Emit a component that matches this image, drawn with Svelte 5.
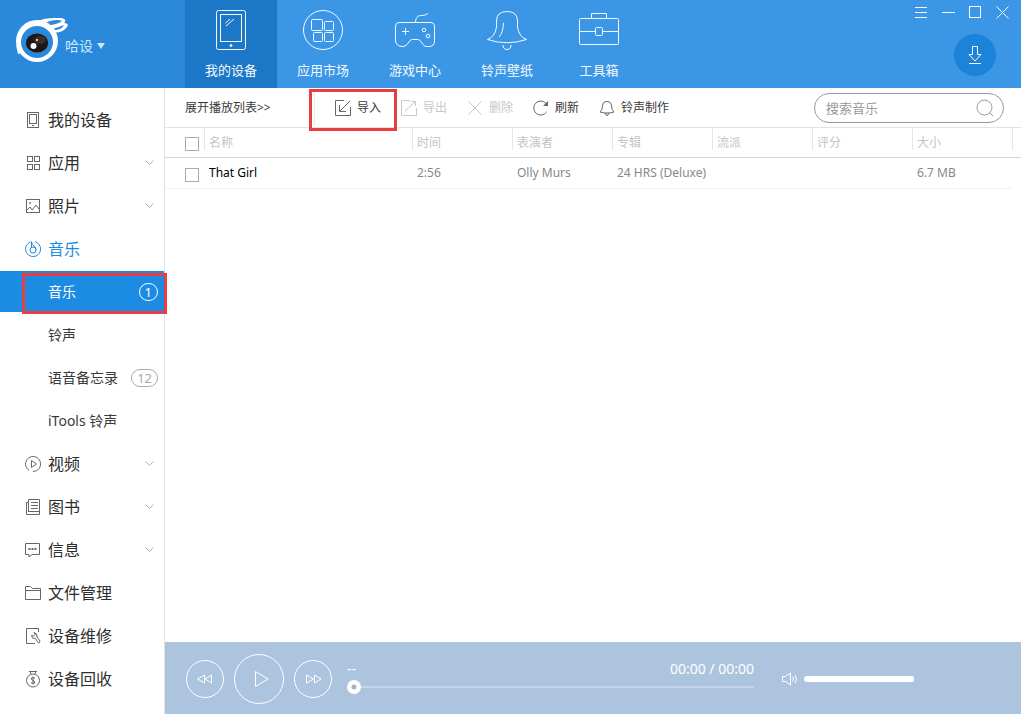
<script>
  const tabs = [
    { id: 'device', label: '我的设备', active: true },
    { id: 'apps', label: '应用市场' },
    { id: 'games', label: '游戏中心' },
    { id: 'bell', label: '铃声壁纸' },
    { id: 'tools', label: '工具箱' }
  ];

  const menu = [
    { icon: 'device', label: '我的设备' },
    { icon: 'apps', label: '应用', expandable: true },
    { icon: 'photo', label: '照片', expandable: true },
    {
      icon: 'music',
      label: '音乐',
      open: true,
      children: [
        { label: '音乐', count: 1, selected: true },
        { label: '铃声' },
        { label: '语音备忘录', count: 12 },
        { label: 'iTools 铃声' }
      ]
    },
    { icon: 'video', label: '视频', expandable: true },
    { icon: 'book', label: '图书', expandable: true },
    { icon: 'message', label: '信息', expandable: true },
    { icon: 'folder', label: '文件管理' },
    { icon: 'repair', label: '设备维修' },
    { icon: 'recycle', label: '设备回收' }
  ];

  const actions = [
    { icon: 'import', label: '导入', marked: true },
    { icon: 'export', label: '导出', disabled: true },
    { icon: 'delete', label: '删除', disabled: true },
    { icon: 'refresh', label: '刷新' },
    { icon: 'ring', label: '铃声制作' }
  ];

  const columns = ['时间', '表演者', '专辑', '流派', '评分', '大小'];
  const songs = [
    { name: 'That Girl', cells: ['2:56', 'Olly Murs', '24 HRS (Deluxe)', '', '', '6.7 MB'] }
  ];

  let query = $state('');
  let position = $state(0);
  let volume = $state(100);
</script>

<div class="app">
  <header>
    <div class="brand">
      <svg class="logo" viewBox="0 0 54 48" width="54" height="48" aria-hidden="true">
        <path d="M4 17C12 7 28 1 43 2C50 2 52 4 49 7C54 7 54 10 49 14C46 16 43 17 39 16L36 20Z" fill="#fff" />
        <path d="M28 8C35 4 43 3 47 5C45 7 38 9 31 10ZM38 13L49 9C48 12 43 14 40 14Z" fill="#2b89dc" />
        <circle cx="22" cy="25" r="21" fill="#fff" />
        <path d="M1 29L3 38L8 37Z" fill="#fff" />
        <circle cx="22" cy="26" r="16" fill="#2b89dc" />
        <ellipse cx="22" cy="27" rx="11" ry="9.500" fill="#1d1716" />
        <ellipse cx="25" cy="24" rx="6" ry="4" fill="#39302d" />
        <circle cx="22" cy="24" r="1" fill="#fff" />
        <circle cx="18.500" cy="30" r="3" fill="#fff" />
      </svg>
      <button class="user" type="button">哈设
        <svg viewBox="0 0 8 6" width="8" height="6" aria-hidden="true"><path d="M0 0H8L4 6Z" fill="currentColor" /></svg>
      </button>
    </div>

    <nav class="tabs">
      {#each tabs as tab}
        <button type="button" class:active={tab.active}>
          <svg viewBox="0 0 42 42" width="42" height="42" class="line" aria-hidden="true">
            {#if tab.id === 'device'}
              <rect x="6.500" y="1.500" width="29" height="39" rx="2" />
              <rect x="10.500" y="5.500" width="21" height="27" />
              <path d="M15.500 14L20 10M16 17L24 10" />
              <circle cx="21" cy="36.500" r="1" fill="currentColor" />
            {:else if tab.id === 'apps'}
              <circle cx="21" cy="21" r="19.500" />
              <rect x="9.500" y="10.500" width="11" height="11" rx="1" />
              <rect x="22.500" y="12.500" width="9" height="9" rx="1" />
              <rect x="11.500" y="23.500" width="9" height="9" rx="1" />
              <rect x="22.500" y="23.500" width="9" height="9" rx="1" />
            {:else if tab.id === 'games'}
              <path d="M5 13.500H37Q40.500 13.500 40.500 17V32Q40.500 37.500 35 37.500H32Q30 37.500 28 34L26 31.500Q25 30.500 23.500 30.500H18.500Q17 30.500 16 31.500L13 35.500Q11 37.500 9 37.500Q1.500 37.500 1.500 31V17Q1.500 13.500 5 13.500Z" />
              <path d="M21.500 13C22 7 25 6.500 28 6.500Q32 6 34 4.500M8 22.500H15M11.500 19V26" />
              <circle cx="30" cy="21" r="1.800" /><circle cx="34" cy="27" r="1.800" />
            {:else if tab.id === 'bell'}
              <path d="M1.500 30.500Q9 28 10.500 18V12Q10.500 2.500 21 2.500Q31.500 2.500 31.500 12V18Q33 28 40.500 30.500Q21 37 1.500 30.500Z" />
              <path d="M17 36Q17 40.500 21 40.500Q25 40.500 25 36M17.500 14Q17 24 13 28" />
            {:else}
              <rect x="1.500" y="9.500" width="39" height="26" rx="1" />
              <path d="M13.500 9V4.500H28.500V9M2 22.500H17M25 22.500H40" />
              <rect x="17.500" y="18.500" width="7" height="8" rx="1" />
            {/if}
          </svg>
          <span>{tab.label}</span>
        </button>
      {/each}
    </nav>

    <div class="corner">
      <div class="window">
        <button type="button" aria-label="菜单"><svg viewBox="0 0 13 13" width="13" height="13" class="line"><path d="M0 1.500H12M0 6.500H12M0 11.500H12" /></svg></button>
        <button type="button" aria-label="最小化"><svg viewBox="0 0 13 13" width="13" height="13" class="line"><path d="M0 6.500H13" /></svg></button>
        <button type="button" aria-label="最大化"><svg viewBox="0 0 13 13" width="13" height="13" class="line"><rect x=".5" y=".5" width="11" height="11" /></svg></button>
        <button type="button" aria-label="关闭"><svg viewBox="0 0 13 13" width="13" height="13" class="line"><path d="M.5 .5L12.500 12.500M12.500 .5L.5 12.500" /></svg></button>
      </div>
      <button class="download" type="button" aria-label="下载">
        <svg viewBox="0 0 16 20" width="16" height="20" class="line"><path d="M5.500 1.500H10.500V9.500H14L8 16L2 9.500H5.500ZM2 18.500H14" /></svg>
      </button>
    </div>
  </header>

  <div class="body">
    <aside>
      {#each menu as item}
        <button type="button" class="item" class:open={item.open}>
          <svg viewBox="0 0 18 18" width="18" height="18" class="line" aria-hidden="true">
            {#if item.icon === 'device'}
              <rect x="3.500" y="1.500" width="11" height="15" /><rect x="5.500" y="3.500" width="7" height="9" /><path d="M8 14.500H10" />
            {:else if item.icon === 'apps'}
              <rect x="3.500" y="2.500" width="5" height="5" /><rect x="10.500" y="2.500" width="5" height="5" /><rect x="3.500" y="10.500" width="5" height="5" /><rect x="10.500" y="10.500" width="5" height="5" />
            {:else if item.icon === 'photo'}
              <rect x="2.500" y="2.500" width="13" height="13" /><path d="M3 13L6 10L8 13L12 8L15 12" /><circle cx="6" cy="6" r=".6" />
            {:else if item.icon === 'music'}
              <path d="M6.500 2A7.500 7.500 0 1 0 11 1.800M7.500 1.500V7.500M7.500 2Q8 4.500 10 6Q12 7.500 12 10" /><circle cx="9" cy="10" r="3" />
            {:else if item.icon === 'video'}
              <path d="M5 15.300A7.500 7.500 0 1 1 9 16.500M7.500 5.500L12.500 9L7.500 12.500Z" />
            {:else if item.icon === 'book'}
              <path d="M4.500 14V1.500H15.500V16.500H2.500V4.500H4.500M7 4.500H14M7 7.500H14M7 10.500H14M4.500 13.500H15" />
            {:else if item.icon === 'message'}
              <path d="M1.500 2.500H15.500V13.500H8L5 16V13.500H1.500Z" /><path d="M4.500 8H6.500M7.500 8H9.500M10.500 8H12.500" stroke-width="2" />
            {:else if item.icon === 'folder'}
              <path d="M1.500 15.500V2.500H6.500L8.500 4.500H16.500V15.500ZM2 6.500H16" />
            {:else if item.icon === 'repair'}
              <path d="M14.500 5V1.500H2.500V16.500H11" />
              <path d="M11.500 11.500L14 15.500Q16 16.500 16 14L13 10Q13.500 6 10 5.500L11 7.500L9.500 9L7.500 8.500Q7.500 12 11.500 11.500Z" />
            {:else}
              <circle cx="9" cy="10.500" r="6.500" /><path d="M5 1.500H13M6 2L7.500 4.500M12 2L10.500 4.500M11 8.500Q9 7 7.500 8Q6.500 9.500 9 10.500Q11.500 11.500 10.500 13Q9 14 7 12.500M9 6.500V14.500" />
            {/if}
          </svg>
          <span>{item.label}</span>
          {#if item.expandable}
            <svg class="chevron" viewBox="0 0 9 5" width="9" height="5" aria-hidden="true"><path d="M.5 .5L4.500 4.500L8.500 .5" /></svg>
          {/if}
        </button>
        {#each item.children ?? [] as child}
          <button type="button" class="sub" class:selected={child.selected}>
            <span>{child.label}</span>
            {#if child.count}<span class="count">{child.count}</span>{/if}
            {#if child.selected}<i class="mark"></i>{/if}
          </button>
        {/each}
      {/each}
    </aside>

    <main>
      <div class="toolbar">
        <button type="button" class="expand">展开播放列表&gt;&gt;</button>
        <div class="actions">
          {#each actions as action}
            <button type="button" disabled={action.disabled}>
              <svg viewBox="0 0 16 16" width="16" height="16" class="line" aria-hidden="true">
                {#if action.icon === 'import'}
                  <path d="M9 .5H.5V15.500H15.500V7M15 1L5 11M4.500 5V11.500H11" />
                {:else if action.icon === 'export'}
                  <path d="M9 .5H.5V15.500H15.500V8M4 11L14.500 1.500M10 1.500H14.500V6" />
                {:else if action.icon === 'delete'}
                  <path d="M1.500 1.500L14.500 14.500M14.500 1.500L1.500 14.500" />
                {:else if action.icon === 'refresh'}
                  <path d="M13.500 12A7 7 0 1 1 13 3.500" /><path d="M15 1V6H10Z" fill="currentColor" stroke="none" />
                {:else}
                  <path d="M1 12Q3.500 10 3.500 6Q3.500 1.500 8 1.500Q12.500 1.500 12.500 6Q12.500 10 15 12Q12 13 8 13Q4 13 1 12ZM6.500 13Q6.500 15.500 8 15.500Q9.500 15.500 9.500 13" />
                {/if}
              </svg>
              <span>{action.label}</span>
              {#if action.marked}<i class="mark"></i>{/if}
            </button>
          {/each}
        </div>
        <label class="search">
          <input type="text" placeholder="搜索音乐" aria-label="搜索音乐" bind:value={query} />
          <svg viewBox="0 0 18 18" width="18" height="18" class="line" aria-hidden="true"><circle cx="8.500" cy="8.500" r="7.500" /><path d="M14 14L17 17" /></svg>
        </label>
      </div>

      <div class="list">
        <table>
          <colgroup>
            <col class="c-check" /><col />
            {#each columns as _}<col class="c-data" />{/each}
            <col class="c-end" />
          </colgroup>
          <thead>
            <tr>
              <th class="check"><input type="checkbox" aria-label="全选" /></th>
              <th>名称</th>
              {#each columns as column}<th>{column}</th>{/each}
              <td></td>
            </tr>
          </thead>
          <tbody>
            {#each songs as song}
              <tr>
                <td class="check"><input type="checkbox" aria-label={song.name} /></td>
                <td class="name">{song.name}</td>
                {#each song.cells as cell}<td>{cell}</td>{/each}
                <td class="end"></td>
              </tr>
            {/each}
          </tbody>
        </table>
      </div>

      <footer>
        <button type="button" class="round" aria-label="上一首"><svg viewBox="0 0 18 12" width="18" height="12" class="line"><path d="M8.500 2V10L1.500 6ZM15.500 2V10L9 6Z" /></svg></button>
        <button type="button" class="round play" aria-label="播放"><svg viewBox="0 0 18 18" width="18" height="18" class="line"><path d="M5.500 1.500V16.500L18 9Z" /></svg></button>
        <button type="button" class="round" aria-label="下一首"><svg viewBox="0 0 18 12" width="18" height="12" class="line"><path d="M2.500 2V10L9.500 6ZM10.500 2V10L17 6Z" /></svg></button>
        <div class="progress">
          <div class="info"><span>--</span><span class="time">00:00 / 00:00</span></div>
          <input type="range" min="0" max="100" aria-label="播放进度" bind:value={position} />
        </div>
        <div class="volume">
          <svg viewBox="0 0 16 14" width="16" height="14" class="line" aria-hidden="true"><path d="M.5 4.500H3.500L8.500 1V13L3.500 9.500H.5ZM10.500 4.500Q12.500 7 10.500 9.500M13 3Q16 7 13 11" /></svg>
          <input type="range" min="0" max="100" aria-label="音量" bind:value={volume} />
        </div>
      </footer>
    </main>
  </div>
</div>

<style>
  :global(body) { margin: 0; }
  .app {
    display: flex;
    flex-direction: column;
    min-height: 100vh;
    background: #fff;
    color: #3a3a3a;
    font: 12px/18px "Noto Sans", "Noto Sans CJK SC", sans-serif;
  }
  button, input { font: inherit; color: inherit; }
  button { border: 0; padding: 0; background: none; }
  svg { display: block; flex: none; }
  .line { fill: none; stroke: currentColor; stroke-width: 1; }

  header { display: flex; height: 88px; background: #3b97e6; color: #f2faff; }
  .brand { display: flex; width: 185px; box-sizing: border-box; padding: 16px 0 0 15px; background: #2b89dc; }
  .logo { margin-right: -4px; }
  .user { display: flex; align-items: center; gap: 4px; height: 20px; margin-top: 20px; font-size: 14px; line-height: 20px; color: #c9e9ff; }
  .tabs { display: flex; flex: 1; font-size: 13px; }
  .tabs button { display: flex; flex-direction: column; align-items: center; width: 92px; padding-top: 9px; gap: 10px; }
  .tabs .active { background: #1c77c7; }
  .corner { display: flex; flex-direction: column; align-items: flex-end; gap: 15px; padding: 6px 12px 0 0; }
  .window { display: flex; gap: 14px; }
  .download { display: grid; place-items: center; width: 42px; height: 42px; margin-right: 13px; border-radius: 50%; background: #1c83d8; }

  .body { display: flex; flex: 1; }
  aside { display: flex; flex-direction: column; width: 164px; padding-top: 10px; border-right: 1px solid #e2e2e2; }
  .item { display: flex; align-items: center; gap: 6px; height: 43px; padding: 0 10px 0 24px; font-size: 16px; color: #2e2e2e; }
  .item .line { color: #666; }
  .item.open, .item.open .line { color: #1c8be0; }
  .chevron { margin-left: auto; fill: none; stroke: #b0b0b0; }
  .sub { position: relative; display: flex; align-items: center; justify-content: space-between; height: 41px; margin: 1px 0; padding: 0 6px 0 48px; font-size: 14px; }
  .sub.selected { background: #1c8ce3; color: #fff; }
  .count { box-sizing: border-box; min-width: 19px; height: 18px; padding: 0 5px; border: 1px solid #aaa; border-radius: 9px; font-size: 13px; line-height: 16px; color: #aaa; text-align: center; }
  .selected .count { border-color: #fff; color: #fff; }
  .mark { position: absolute; border: 3px solid #e83e42; pointer-events: none; }
  .sub .mark { inset: 2px -3px -2px 22px; }

  main { display: flex; flex: 1; flex-direction: column; min-width: 0; }
  .toolbar { display: flex; align-items: center; height: 39px; padding: 0 17px 0 20px; border-bottom: 1px solid #e3e3e3; }
  .expand { width: 129px; text-align: left; white-space: nowrap; }
  .actions { display: flex; flex: 1; align-items: center; gap: 20px; height: 36px; padding-left: 20px; border-left: 1px solid #e8e8e8; }
  .actions button { position: relative; display: flex; align-items: center; gap: 6px; white-space: nowrap; }
  .actions .line { color: #666; }
  .actions button:disabled, .actions button:disabled .line { color: #c8c8c8; }
  .actions .mark { inset: -10px -16px -14px -26px; }
  .search { display: flex; align-items: center; box-sizing: border-box; width: 190px; height: 30px; padding: 0 9px 0 11px; border: 1px solid #999; border-radius: 15px; color: #999; font-size: 13px; }
  .search input { flex: 1; min-width: 0; padding: 0; border: 0; outline: 0; background: none; }
  .search input::placeholder { color: #999; opacity: 1; }

  .list { flex: 1; }
  table { width: 100%; table-layout: fixed; border-collapse: separate; border-spacing: 0; }
  .c-check { width: 39px; }
  .c-data { width: 100px; }
  .c-end { width: 9px; }
  th, td { height: 29px; padding: 0 0 0 5px; border-bottom: 1px solid #d6d6d6; text-align: left; font-weight: 400; white-space: nowrap; }
  thead th, thead td { color: #c4c4c4; background: linear-gradient(#e6e6e6, #e6e6e6) 0 0 / 1px 22px no-repeat; }
  thead .check { background: none; }
  tbody td { height: 30px; border-color: #f2f2f2; color: #888; }
  tbody .name { color: #000; }
  tbody .end { border-color: transparent; }
  th.check, td.check { padding: 3px 0 0 20px; height: 26px; }
  td.check { height: 27px; }
  .check input { display: block; appearance: none; box-sizing: border-box; width: 14px; height: 14px; margin: 0; border: 1px solid #aaa; background: #fff; }

  footer { display: flex; align-items: center; height: 72px; padding: 0 107px 0 21px; gap: 10px; background: #acc4de; color: #fff; }
  footer .round { display: grid; place-items: center; flex: none; box-sizing: border-box; width: 38px; height: 38px; margin-top: 2px; border: 1px solid #fff; border-radius: 50%; }
  footer .play { width: 50px; height: 50px; }
  .progress { flex: 1; margin: 0 18px 0 5px; }
  .info { display: flex; justify-content: space-between; font-size: 14px; }
  .progress input { display: block; appearance: none; width: 100%; height: 18px; margin: 0; background: linear-gradient(#c3d5ee, #c3d5ee) center / 100% 2px no-repeat; }
  .progress input::-webkit-slider-thumb { appearance: none; width: 14px; height: 14px; border-radius: 50%; background: radial-gradient(circle, #a9b4c2 2px, #fff 3px); }
  .volume { display: flex; align-items: center; gap: 6px; margin-top: 2px; }
  .volume input { appearance: none; width: 110px; height: 6px; margin: 0; border-radius: 3px; background: #fff; }
  .volume input::-webkit-slider-thumb { appearance: none; width: 6px; height: 6px; border-radius: 50%; background: #fff; }
</style>
